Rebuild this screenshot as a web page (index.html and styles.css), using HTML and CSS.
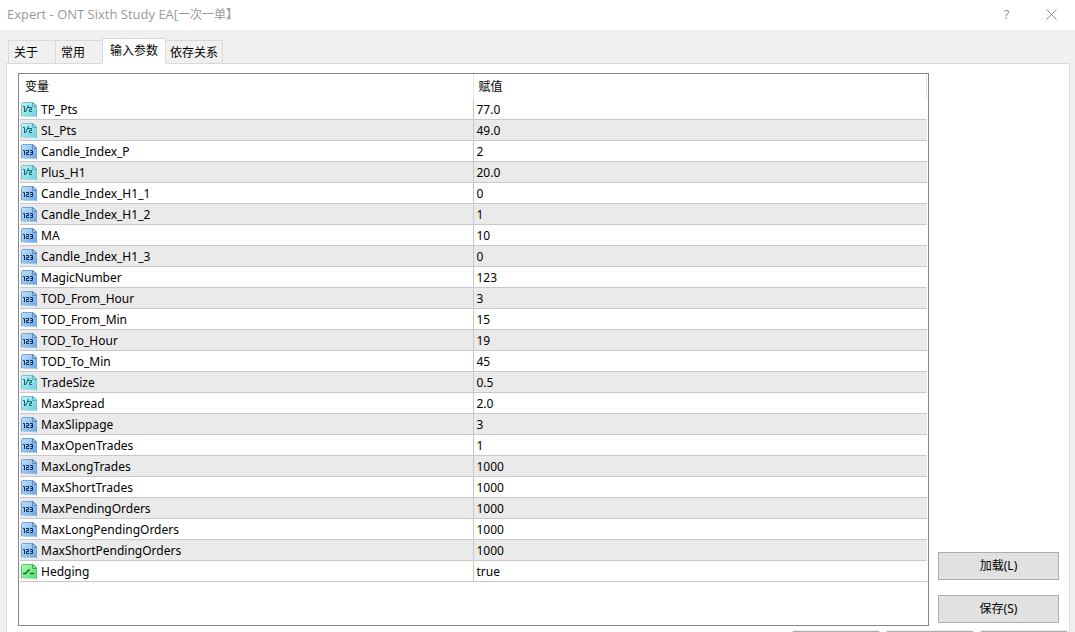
FILE: index.html
```html
<!DOCTYPE html>
<html lang="zh-CN">
<head>
<meta charset="utf-8">
<title>Expert - ONT Sixth Study EA</title>
<link rel="stylesheet" href="styles.css">
</head>
<body>
<svg class="defs" aria-hidden="true">
  <defs>
    <linearGradient id="g-teal" x1="0" y1="0" x2="1" y2="1"><stop offset="0" stop-color="#c0f6f9"/><stop offset="1" stop-color="#66ccd9"/></linearGradient>
    <linearGradient id="g-blue" x1="0" y1="0" x2="1" y2="1"><stop offset="0" stop-color="#c4e2fc"/><stop offset="1" stop-color="#65a3e0"/></linearGradient>
    <linearGradient id="g-green" x1="0" y1="0" x2="1" y2="1"><stop offset="0" stop-color="#b0fab2"/><stop offset="1" stop-color="#55dc6c"/></linearGradient>
    <symbol id="double" viewBox="0 0 16 16">
      <path d="M0 15V1L1 0H12L16 4V16L14 14 13 15H12L11 14 10 15H9L8 14 7 15H6L5 14 4 15H3L2 14Z" fill="url(#g-teal)"/>
      <path d="M.5 14V1.500L1.500.500H12L15.500 4V15" fill="none" stroke="#76c4cd"/>
      <path d="M11.500.500V4.500H15.500Z" fill="#a5e6ec" stroke="#55adb8"/>
      <path d="M2 4.500H3.500V10M7.500 3 4.500 10M7 5.500H10.500V7.500H8.500V9.500H11" fill="none" stroke="#12616e"/>
    </symbol>
    <symbol id="int" viewBox="0 0 16 16">
      <path d="M0 15V1L1 0H12L16 4V16L14 14 13 15H12L11 14 10 15H9L8 14 7 15H6L5 14 4 15H3L2 14Z" fill="url(#g-blue)"/>
      <path d="M.5 14V1.500L1.500.500H12L15.500 4V15" fill="none" stroke="#74a3d3"/>
      <path d="M11.500.500V4.500H15.500Z" fill="#a9cff4" stroke="#5587bb"/>
      <path d="M2 6.500H3.500V11M5 6.500H7.500V8.500H5.500V10.500H8M9 6.500H11.500V10.500H9M9.500 8.500H11.500" fill="none" stroke="#0b2c5c"/>
    </symbol>
    <symbol id="bool" viewBox="0 0 16 16">
      <path d="M0 15V1L1 0H12L16 4V16L14 14 13 15H12L11 14 10 15H9L8 14 7 15H6L5 14 4 15H3L2 14Z" fill="url(#g-green)"/>
      <path d="M.5 14V1.500L1.500.500H12L15.500 4V15" fill="none" stroke="#55c568"/>
      <path d="M11.500.500V4.500H15.500Z" fill="#9af0a0" stroke="#3aa94e"/>
      <path d="M2 9.500H4.500L8.500 5.500M9 9.500H13" fill="none" stroke="#0f6a22" stroke-width="1.500"/>
    </symbol>
  </defs>
</svg>
<div class="window">
  <header class="titlebar">
    <h1 class="title">Expert - ONT Sixth Study EA[<span class="cjk">一次一单】</span></h1>
    <button class="caption-button" type="button" aria-label="Help">?</button>
    <button class="caption-button" type="button" aria-label="Close"><svg class="close" viewBox="0 0 11 11"><path d="M.5.500 10.500 10.500M10.500.500.500 10.500"/></svg></button>
  </header>
  <nav class="tabs" role="tablist">
    <button class="tab" role="tab" type="button">关于</button>
    <button class="tab" role="tab" type="button">常用</button>
    <button class="tab active" role="tab" type="button" aria-selected="true">输入参数</button>
    <button class="tab tight" role="tab" type="button">依存关系</button>
  </nav>
  <main class="panel">
    <div class="content">
      <div class="list">
        <table class="params">
          <thead><tr><th>变量</th><th>赋值</th></tr></thead>
          <tbody>
            <tr><td><svg class="icon"><use href="#double"/></svg>TP_Pts</td><td>77.0</td></tr>
            <tr><td><svg class="icon"><use href="#double"/></svg>SL_Pts</td><td>49.0</td></tr>
            <tr><td><svg class="icon"><use href="#int"/></svg>Candle_Index_P</td><td>2</td></tr>
            <tr><td><svg class="icon"><use href="#double"/></svg>Plus_H1</td><td>20.0</td></tr>
            <tr><td><svg class="icon"><use href="#int"/></svg>Candle_Index_H1_1</td><td>0</td></tr>
            <tr><td><svg class="icon"><use href="#int"/></svg>Candle_Index_H1_2</td><td>1</td></tr>
            <tr><td><svg class="icon"><use href="#int"/></svg>MA</td><td>10</td></tr>
            <tr><td><svg class="icon"><use href="#int"/></svg>Candle_Index_H1_3</td><td>0</td></tr>
            <tr><td><svg class="icon"><use href="#int"/></svg>MagicNumber</td><td>123</td></tr>
            <tr><td><svg class="icon"><use href="#int"/></svg>TOD_From_Hour</td><td>3</td></tr>
            <tr><td><svg class="icon"><use href="#int"/></svg>TOD_From_Min</td><td>15</td></tr>
            <tr><td><svg class="icon"><use href="#int"/></svg>TOD_To_Hour</td><td>19</td></tr>
            <tr><td><svg class="icon"><use href="#int"/></svg>TOD_To_Min</td><td>45</td></tr>
            <tr><td><svg class="icon"><use href="#double"/></svg>TradeSize</td><td>0.5</td></tr>
            <tr><td><svg class="icon"><use href="#double"/></svg>MaxSpread</td><td>2.0</td></tr>
            <tr><td><svg class="icon"><use href="#int"/></svg>MaxSlippage</td><td>3</td></tr>
            <tr><td><svg class="icon"><use href="#int"/></svg>MaxOpenTrades</td><td>1</td></tr>
            <tr><td><svg class="icon"><use href="#int"/></svg>MaxLongTrades</td><td>1000</td></tr>
            <tr><td><svg class="icon"><use href="#int"/></svg>MaxShortTrades</td><td>1000</td></tr>
            <tr><td><svg class="icon"><use href="#int"/></svg>MaxPendingOrders</td><td>1000</td></tr>
            <tr><td><svg class="icon"><use href="#int"/></svg>MaxLongPendingOrders</td><td>1000</td></tr>
            <tr><td><svg class="icon"><use href="#int"/></svg>MaxShortPendingOrders</td><td>1000</td></tr>
            <tr><td><svg class="icon"><use href="#bool"/></svg>Hedging</td><td>true</td></tr>
          </tbody>
        </table>
      </div>
      <div class="side">
        <button class="button" type="button">加载(L)</button>
        <button class="button" type="button">保存(S)</button>
      </div>
    </div>
    <footer class="footer">
      <button class="button dialog" type="button" aria-label="OK"></button>
      <button class="button dialog" type="button" aria-label="Cancel"></button>
      <button class="button dialog" type="button" aria-label="Reset"></button>
    </footer>
  </main>
</div>
</body>
</html>
```

FILE: styles.css
```css
* { box-sizing: border-box; }
body {
  margin: 0;
  background: #f0f0f0;
  color: #000;
  font: 12px/16px "Noto Sans", "Noto Sans CJK SC", sans-serif;
}
button { font: inherit; color: inherit; padding: 0; }
.defs { position: absolute; width: 0; height: 0; }
.window { display: flex; flex-direction: column; height: 100vh; overflow: hidden; }

.titlebar { display: flex; flex: none; align-items: center; height: 30px; padding: 0 1px 0 7px; background: #fff; color: #999; }
.title { flex: 1; margin: 0; padding-bottom: 2px; font-family: "Open Sans", "Noto Sans CJK SC", sans-serif; font-size: 13px; font-weight: 400; }
.cjk { font-size: 12px; }
.caption-button { width: 45px; height: 30px; padding-bottom: 2px; border: 0; background: none; font-size: 13px; }
.close { display: block; width: 11px; height: 11px; margin: 0 auto; fill: none; stroke: #888; }

.tabs { display: flex; flex: none; align-items: flex-end; height: 34px; padding-left: 8px; margin-bottom: -1px; }
.tab { height: 24px; padding: 1px 17px 0 5px; border: 1px solid #d9d9d9; border-right: 0; background: #f0f0f0; }
.tab.active { position: relative; height: 26px; padding: 0 7px; border-right: 1px solid #d9d9d9; border-bottom-color: #fff; background: #fff; }
.tab.tight { padding: 1px 4px 0; border-left: 0; border-right: 1px solid #d9d9d9; }

.panel { display: flex; flex-direction: column; flex: 1; min-height: 0; margin: 0 5px 0 6px; padding: 9px 10px 0 11px; border: 1px solid #d9d9d9; border-bottom: 0; background: #fff; }
.content { display: flex; gap: 9px; flex: none; }
.list { flex: 1; min-width: 0; padding: 0 1px 43px; border: 1px solid #828790; }
.params { width: 100%; border-spacing: 0; table-layout: fixed; }
.params th { height: 25px; padding: 1px 5px 0; text-align: left; font-weight: 400; border-right: 1px solid #e5e5e5; }
.params td { height: 21px; padding: 2px 3px 0 1px; line-height: 18px; border-bottom: 1px solid #c8c8c8; }
.params td:first-child { border-right: 1px solid #c8c8c8; }
.params td:last-child { padding-left: 3px; }
.params tr:nth-child(even) td { background: #eaeaea; }
.icon { width: 16px; height: 16px; margin: 1px 4px 0 0; vertical-align: top; }

.side { display: flex; flex-direction: column; justify-content: flex-end; gap: 15px; width: 121px; padding-bottom: 3px; }
.button { height: 28px; border: 1px solid #adadad; background: #e1e1e1; }
.footer { display: flex; flex: none; justify-content: flex-end; gap: 8px; margin: 5px -8px 0 0; }
.dialog { width: 86px; outline: 1px solid #f0f0f0; }
```
